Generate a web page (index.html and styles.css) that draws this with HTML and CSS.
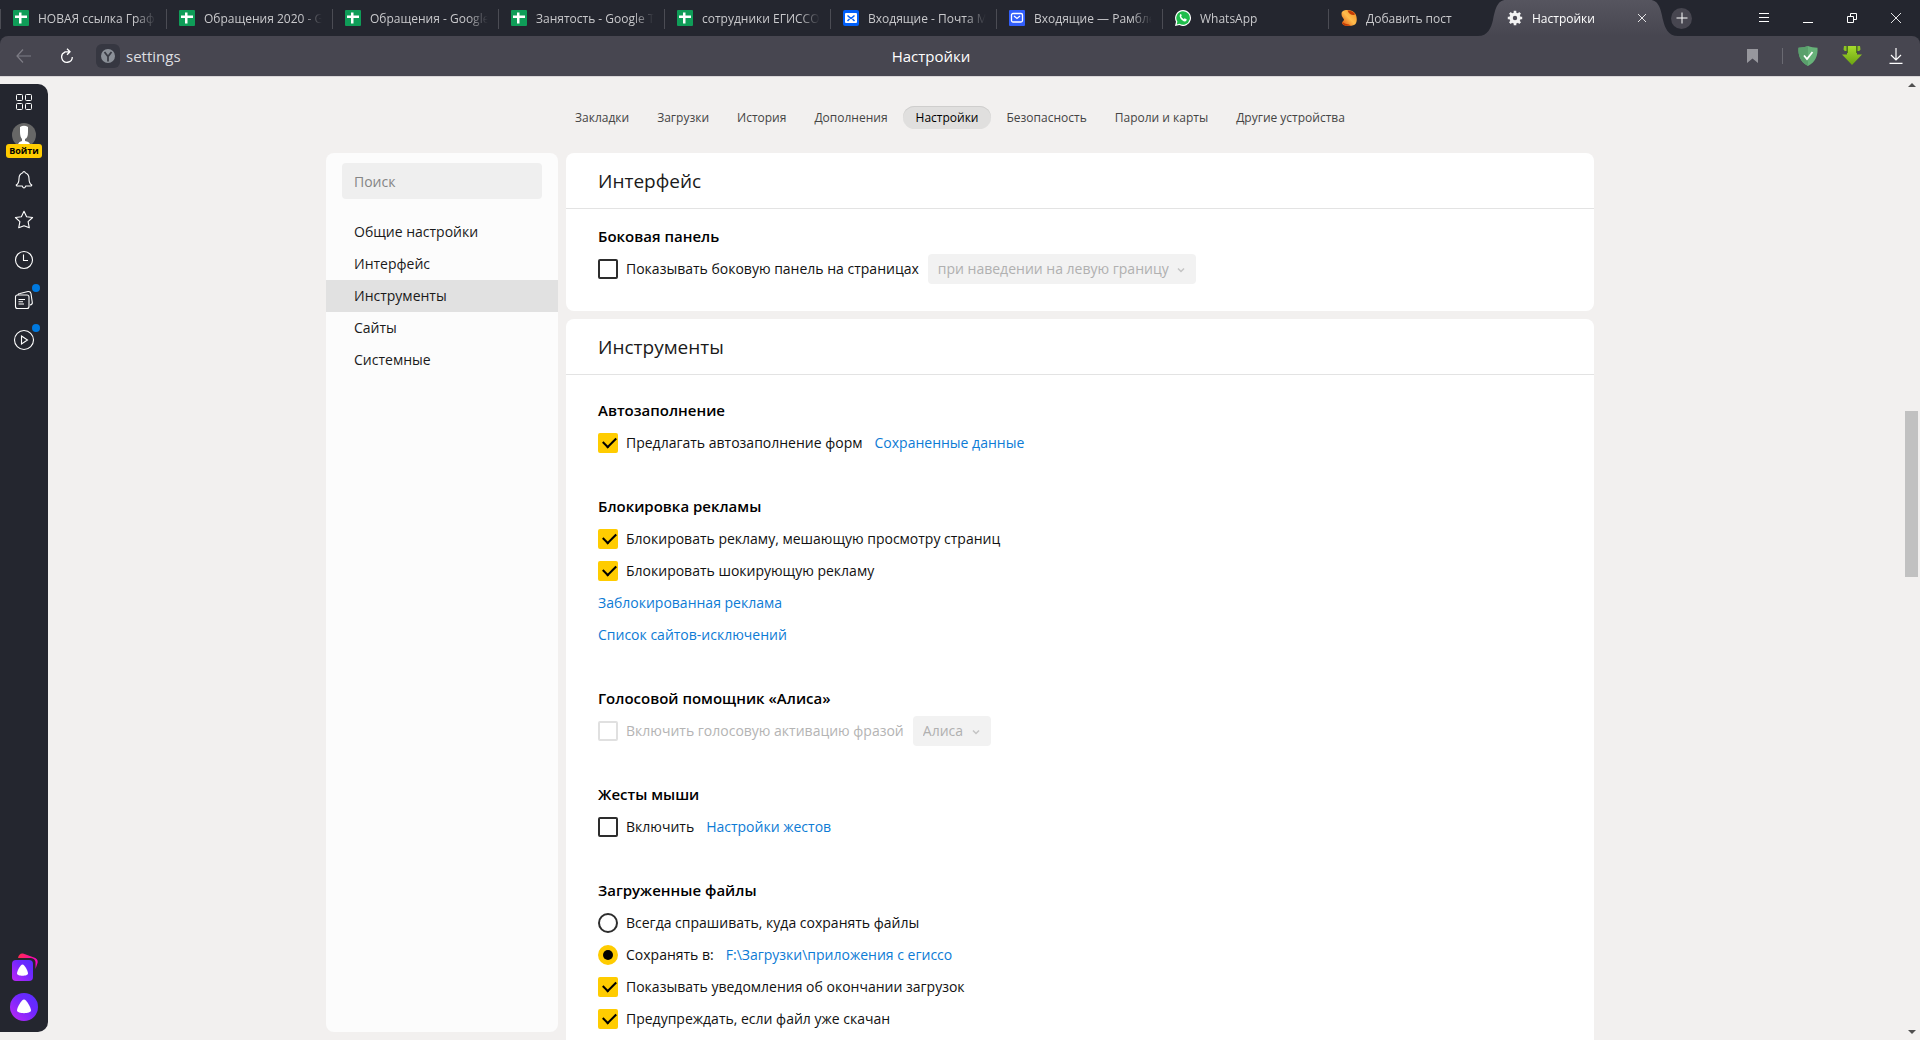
FILE: index.html
```html
<!DOCTYPE html>
<html lang="ru">
<head>
<meta charset="utf-8">
<meta name="viewport" content="width=device-width, initial-scale=1">
<title>Настройки</title>
<link rel="stylesheet" href="styles.css">
</head>
<body>
<svg class="defs" aria-hidden="true">
  <defs>
    <linearGradient id="tab-fill" x1="0" y1="0" x2="0" y2="1"><stop offset="0" stop-color="#56555f"/><stop offset="1" stop-color="#474650"/></linearGradient>
    <linearGradient id="alice" x1="0" y1="1" x2="1" y2="0"><stop offset="0" stop-color="#c127f5"/><stop offset=".6" stop-color="#6f27ff"/><stop offset="1" stop-color="#5330ff"/></linearGradient>
    <linearGradient id="pink" x1="0" y1="0" x2="1" y2="0"><stop offset="0" stop-color="#ff2a4d"/><stop offset="1" stop-color="#f800c8"/></linearGradient>
    <linearGradient id="lime" x1="0" y1="0" x2="0" y2="1"><stop offset="0" stop-color="#a6dc2c"/><stop offset="1" stop-color="#6ba312"/></linearGradient>
    <linearGradient id="nut" x1="1" y1="0" x2="0" y2="1"><stop offset="0" stop-color="#f08a20"/><stop offset=".5" stop-color="#ffbd4d"/><stop offset="1" stop-color="#e0500a"/></linearGradient>
    <symbol id="sheet" viewBox="0 0 16 16"><rect width="16" height="16" rx="1" fill="#0f9d58"/><path d="M6 2.500h2.500v11H6zM2 5.500h12v2.500H2z" fill="#fff"/></symbol>
  </defs>
</svg>

<header class="tabstrip">
  <div class="tabs" role="tablist">
    <button class="tab" role="tab"><svg class="favicon"><use href="#sheet"/></svg><span class="tab-title">НОВАЯ ссылка График</span></button>
    <button class="tab" role="tab"><svg class="favicon"><use href="#sheet"/></svg><span class="tab-title">Обращения 2020 - Google</span></button>
    <button class="tab" role="tab"><svg class="favicon"><use href="#sheet"/></svg><span class="tab-title">Обращения - Google Таблицы</span></button>
    <button class="tab" role="tab"><svg class="favicon"><use href="#sheet"/></svg><span class="tab-title">Занятость - Google Таблицы</span></button>
    <button class="tab" role="tab"><svg class="favicon"><use href="#sheet"/></svg><span class="tab-title">сотрудники ЕГИССО</span></button>
    <button class="tab" role="tab"><svg class="favicon" viewBox="0 0 16 16"><rect width="16" height="16" rx="2" fill="#005ff9"/><rect x="2" y="3" width="12" height="10" rx="1" fill="#fff"/><path d="M4.500 5.500 8 8.500l3.500-3M4.500 11l2-2M11.500 11l-2-2" fill="none" stroke="#005ff9" stroke-width="1.500"/></svg><span class="tab-title">Входящие - Почта Mail.ru</span></button>
    <button class="tab" role="tab"><svg class="favicon" viewBox="0 0 16 16"><rect width="16" height="16" rx="1" fill="#315efb"/><rect x="2.500" y="3.500" width="11" height="8.500" rx="1.500" fill="none" stroke="#fff" stroke-width="1.300"/><path d="M5 6l3 2.500L11 6" fill="none" stroke="#fff" stroke-width="1.300"/></svg><span class="tab-title">Входящие — Рамблер/почта</span></button>
    <button class="tab" role="tab"><svg class="favicon" viewBox="0 0 16 16"><path d="M8 0a8 8 0 1 1-3.700 15.100L0 16l1-4.200A8 8 0 0 1 8 0z" fill="#fff"/><path d="M8 1.200A6.800 6.800 0 1 1 4.500 13.800L1.700 14.400l.7-2.700A6.800 6.800 0 0 1 8 1.200z" fill="#1fbd4b"/><path d="M5.300 4.200c.6-.4 1 0 1.300 1 .2.600 0 .8-.5 1.400.6 1.200 1.400 2 2.700 2.600.8-.9.900-1 1.300-.8l1.500.8c.4.300-.2 2.200-1.900 2.200C7.200 11.200 3.200 6.500 5.300 4.200z" fill="#fff"/></svg><span class="tab-title">WhatsApp</span></button>
    <button class="tab" role="tab"><svg class="favicon" viewBox="0 0 16 16"><path d="M.5 4C.5 1 3 0 6 0c4 0 7 1.500 8.500 4 1.500 3 2 8-.5 10.500C12 16 9 16 7 16c-4 0-6-1.500-6-3 0-1.500 2-2 2-3.500C2.500 8 .5 7 .5 4z" fill="url(#nut)"/><path d="M6.500.500c3-.3 6 1 7.500 3.500C13.500 6 8 5 6.500.500zM1.500 12c2 2.500 6 1.500 8.500 3.500-4 1-9 0-8.500-3.500z" fill="#c43c05"/></svg><span class="tab-title">Добавить пост</span></button>
    <div class="tab-active" role="tab" aria-selected="true">
      <svg class="tab-shape" viewBox="0 0 200 36" preserveAspectRatio="none" aria-hidden="true"><path d="M0 36C10 36 13 28 15 20 17 10 19 0 28 0H172c9 0 11 10 13 20 2 8 5 16 15 16z" fill="url(#tab-fill)"/></svg>
      <svg class="favicon" viewBox="0 0 16 16"><circle cx="8" cy="8" r="3.900" fill="none" stroke="#f2f2f2" stroke-width="3.400"/><path d="M8 .8v3M8 12.200v3M.8 8h3M12.200 8h3M2.900 2.900l2.200 2.200M10.900 10.900l2.200 2.200M2.900 13.100l2.200-2.200M10.900 5.100l2.200-2.200" stroke="#f2f2f2" stroke-width="2.600"/></svg>
      <span class="tab-title">Настройки</span>
      <button class="tab-close" aria-label="Закрыть вкладку"><svg width="8" height="8" viewBox="0 0 8 8"><path d="M0 0l8 8M8 0L0 8" stroke="#e4e4e6"/></svg></button>
    </div>
  </div>
  <button class="new-tab" aria-label="Новая вкладка"><svg width="12" height="12" viewBox="0 0 12 12"><path d="M6 .5v11M.5 6h11" stroke="#fff"/></svg></button>
  <div class="window-buttons">
    <button aria-label="Меню"><svg width="12" height="12" viewBox="0 0 12 12"><path d="M1 1.500h10M1 5.500h10M1 9.500h10" stroke="#fff"/></svg></button>
    <button aria-label="Свернуть"><svg width="12" height="12" viewBox="0 0 12 12"><path d="M1 10.500h10" stroke="#fff"/></svg></button>
    <button aria-label="Восстановить"><svg width="12" height="12" viewBox="0 0 12 12"><path d="M4.500 4V1.500h6v6H8M1.500 4.500h6v6h-6z" fill="none" stroke="#fff"/></svg></button>
    <button aria-label="Закрыть"><svg width="12" height="12" viewBox="0 0 12 12"><path d="M1 1l10 10M11 1L1 11" stroke="#e4e4e6"/></svg></button>
  </div>
</header>

<div class="toolbar">
  <button class="back" aria-label="Назад"><svg width="16" height="14" viewBox="0 0 16 14"><path d="M7 .5L1 7l6 6.500M1 7h14" fill="none" stroke="#7d7c85" stroke-width="1.200"/></svg></button>
  <button class="reload" aria-label="Обновить"><svg width="14" height="16" viewBox="0 0 14 16"><path d="M5 4.100A5.300 5.300 0 1 0 12.300 9M4.500 3.800H9.500M7 .8l3 3-3 3" fill="none" stroke="#fff" stroke-width="1.300"/></svg></button>
  <button class="site" aria-label="О сайте"><svg width="14" height="14" viewBox="0 0 14 14"><circle cx="7" cy="7" r="7" fill="#8b9098"/><path d="M3.500 3L7 7.500 10.500 3M7 7v5.500" fill="none" stroke="#3a3c45" stroke-width="1.800"/></svg></button>
  <span class="address">settings</span>
  <span class="page-title">Настройки</span>
  <div class="extensions">
    <button aria-label="В закладки"><svg width="11" height="14" viewBox="0 0 11 14"><path d="M0 0h11v14L5.500 9.500 0 14z" fill="#97979d"/></svg></button>
    <span class="divider"></span>
    <button aria-label="Защита"><svg width="20" height="20" viewBox="0 0 20 20"><path d="M10 0c3 1 6 1.600 9.500 1.800C20 9 18 16 10 20 2 16 0 9 .5 1.800 4 1.600 7 1 10 0z" fill="#67b279"/><path d="M10 0v20C2 16 0 9 .5 1.800 4 1.600 7 1 10 0z" fill="#5aa06c"/><path d="M6 9.500l3 3.500 5.500-7" fill="none" stroke="#fff" stroke-width="1.800"/></svg></button>
    <button aria-label="Скачать видео"><svg width="20" height="20" viewBox="0 0 20 20"><path d="M2 0h2.500v5H2.800L1.500 3.500zM18 0h-2.500v5h1.700l1.300-1.500z" fill="#8cc522"/><path d="M5 0h10v8.500h5L10 19 0 8.500h5z" fill="url(#lime)"/><path d="M5.500 0v7M14.500 0v7" stroke="#4d7a12"/></svg></button>
    <button aria-label="Загрузки"><svg width="14" height="16" viewBox="0 0 14 16"><path d="M7 0v12M2 7l5 5 5-5M.5 15.300h13" fill="none" stroke="#fff" stroke-width="1.200"/></svg></button>
  </div>
</div>

<div class="viewport">
  <aside class="sidebar">
    <button aria-label="Табло"><svg width="18" height="18" viewBox="0 0 18 18"><g fill="none" stroke="#fff"><rect x="1.500" y="1.500" width="6" height="6" rx="1"/><rect x="10.500" y="1.500" width="6" height="6" rx="1"/><rect x="1.500" y="10.500" width="6" height="6" rx="1"/><rect x="10.500" y="10.500" width="6" height="6" rx="1"/></g></svg></button>
    <button class="login"><svg width="24" height="24" viewBox="0 0 24 24"><circle cx="12" cy="12" r="12" fill="#676767"/><path d="M8 4q4-2.500 8 0v5q0 6-3 7v2q4 .5 5 3-6 4-12 0 1-2.500 4-3v-2Q8 14 8 9z" fill="#fff"/></svg><span class="login-label">Войти</span></button>
    <button aria-label="Уведомления"><svg width="18" height="20" viewBox="0 0 18 20"><path d="M9 1.500q1 0 1.200 1.200Q14 4 14 8.500q0 5 2.800 6.500 0 1-1 1h-5Q9 20 7.200 16h-5q-1 0-1-1Q4 13.500 4 8.500 4 4 7.800 2.700 8 1.500 9 1.500z" fill="none" stroke="#fff" stroke-width="1.100"/></svg></button>
    <button aria-label="Закладки"><svg width="20" height="20" viewBox="0 0 20 20"><path d="M10 1.200l2.600 5.600 6 .7-4.500 4.100 1.200 6.200-5.300-2.100-5.300 2.100 1.200-6.200L1.400 7.500l6-.7z" fill="none" stroke="#fff" stroke-width="1.100" stroke-linejoin="round"/></svg></button>
    <button aria-label="История"><svg width="20" height="20" viewBox="0 0 20 20"><circle cx="10" cy="10" r="8.500" fill="none" stroke="#fff" stroke-width="1.100"/><path d="M9.500 4.500v6H14" fill="none" stroke="#fff" stroke-width="1.100"/></svg></button>
    <button class="has-dot" aria-label="Коллекции"><svg width="20" height="20" viewBox="0 0 20 20"><g fill="none" stroke="#fff" stroke-width="1.100"><rect x="1.500" y="5" width="13.500" height="13.500" rx="2"/><path d="M4 5q0-1.500 2-1.500l8-2q2.500-.3 3 2l1.300 9q.2 2-2.300 2.500M4.500 9.500H11M4.500 11.700H9M4.500 14H10"/></g></svg></button>
    <button class="has-dot" aria-label="Видео"><svg width="22" height="22" viewBox="0 0 22 22"><circle cx="11" cy="11" r="9.500" fill="none" stroke="#fff" stroke-width="1.100"/><path d="M8.500 7l6 4-6 4z" fill="none" stroke="#fff" stroke-width="1.100"/></svg></button>
    <button class="alice-cards" aria-label="Навыки Алисы"><svg width="28" height="28" viewBox="0 0 28 28"><path d="M8 5Q9 0 13 .5l11 4Q28.500 6 27.500 10l-2 6V9Q25 5.500 21 5z" fill="url(#pink)"/><rect x="2" y="7" width="21" height="21" rx="4" fill="url(#alice)"/><path d="M12.500 11.500c2 0 5.500 6.500 5.500 9 0 3-11 3-11 0 0-2.500 3.500-9 5.500-9z" fill="#fff"/></svg></button>
    <button aria-label="Алиса"><svg width="28" height="28" viewBox="0 0 28 28"><circle cx="14" cy="14" r="14" fill="url(#alice)"/><path d="M14 6.500c2.500 0 7 8 7 11 0 3.500-14 3.500-14 0 0-3 4.500-11 7-11z" fill="#fff"/></svg></button>
  </aside>

  <main class="page">
    <nav class="sections">
      <a href="#bookmarks">Закладки</a>
      <a href="#downloads">Загрузки</a>
      <a href="#history">История</a>
      <a href="#addons">Дополнения</a>
      <a href="#settings" class="current">Настройки</a>
      <a href="#security">Безопасность</a>
      <a href="#passwords">Пароли и карты</a>
      <a href="#devices">Другие устройства</a>
    </nav>
    <div class="columns">
      <div class="menu">
        <input class="search" type="search" placeholder="Поиск" aria-label="Поиск">
        <nav class="menu-list">
          <a href="#general">Общие настройки</a>
          <a href="#interface">Интерфейс</a>
          <a href="#tools" class="current">Инструменты</a>
          <a href="#sites">Сайты</a>
          <a href="#system">Системные</a>
        </nav>
      </div>
      <div class="cards">
        <section class="card">
          <h2>Интерфейс</h2>
          <div class="card-body">
            <div class="group">
              <h3>Боковая панель</h3>
              <div class="row">
                <label><input type="checkbox">Показывать боковую панель на страницах</label>
                <span class="select"><select disabled aria-label="Когда показывать панель"><option>при наведении на левую границу</option></select><svg width="8" height="6" viewBox="0 0 8 6"><path d="M1 1.500l3 3 3-3" fill="none" stroke="#c4c4c4" stroke-width="1.500"/></svg></span>
              </div>
            </div>
          </div>
        </section>
        <section class="card">
          <h2>Инструменты</h2>
          <div class="card-body roomy">
            <div class="group">
              <h3>Автозаполнение</h3>
              <div class="row"><label><input type="checkbox" checked>Предлагать автозаполнение форм</label><a class="after" href="#saved">Сохраненные данные</a></div>
            </div>
            <div class="group">
              <h3>Блокировка рекламы</h3>
              <div class="row"><label><input type="checkbox" checked>Блокировать рекламу, мешающую просмотру страниц</label></div>
              <div class="row"><label><input type="checkbox" checked>Блокировать шокирующую рекламу</label></div>
              <div class="row"><a href="#blocked">Заблокированная реклама</a></div>
              <div class="row"><a href="#exceptions">Список сайтов-исключений</a></div>
            </div>
            <div class="group">
              <h3>Голосовой помощник «Алиса»</h3>
              <div class="row">
                <label class="disabled"><input type="checkbox" disabled>Включить голосовую активацию фразой</label>
                <span class="select"><select disabled aria-label="Фраза активации"><option>Алиса</option></select><svg width="8" height="6" viewBox="0 0 8 6"><path d="M1 1.500l3 3 3-3" fill="none" stroke="#c4c4c4" stroke-width="1.500"/></svg></span>
              </div>
            </div>
            <div class="group">
              <h3>Жесты мыши</h3>
              <div class="row"><label><input type="checkbox">Включить</label><a class="after" href="#gestures">Настройки жестов</a></div>
            </div>
            <div class="group">
              <h3>Загруженные файлы</h3>
              <div class="row"><label><input type="radio" name="save">Всегда спрашивать, куда сохранять файлы</label></div>
              <div class="row"><label><input type="radio" name="save" checked>Сохранять в:</label><a class="after" href="#folder">F:\Загрузки\приложения с егиссо</a></div>
              <div class="row"><label><input type="checkbox" checked>Показывать уведомления об окончании загрузок</label></div>
              <div class="row"><label><input type="checkbox" checked>Предупреждать, если файл уже скачан</label></div>
            </div>
          </div>
        </section>
      </div>
    </div>
  </main>

  <div class="scrollbar" aria-hidden="true">
    <svg width="8" height="4" viewBox="0 0 8 4"><path d="M0 4l4-4 4 4z" fill="#505050"/></svg>
    <div class="track"><div class="thumb"></div></div>
    <svg width="8" height="4" viewBox="0 0 8 4"><path d="M0 0l4 4 4-4z" fill="#505050"/></svg>
  </div>
</div>
</body>
</html>
```
FILE: styles.css
```css
* { box-sizing: border-box; }

body {
  display: flex;
  flex-direction: column;
  height: 100vh;
  margin: 0;
  overflow: hidden;
  background: #24262f;
  color: #000;
  font: 14px/20px "Open Sans", "Noto Sans", sans-serif;
}

button {
  display: flex;
  align-items: center;
  justify-content: center;
  margin: 0;
  padding: 0;
  border: 0;
  background: none;
  color: inherit;
  font: inherit;
}

a { color: #0d7bd5; text-decoration: none; }
svg { display: block; flex: none; }
.defs { position: absolute; width: 0; height: 0; }

/* Tab strip */
.tabstrip { display: flex; align-items: center; height: 36px; flex: none; }
.tabs { display: flex; min-width: 0; }

.tab {
  flex: 0 1 166px;
  width: 166px;
  min-width: 40px;
  height: 36px;
  padding: 0 9px 0 13px;
  gap: 9px;
  justify-content: flex-start;
  background: linear-gradient(#4b4c54, #4b4c54) 0 9px / 1px 20px no-repeat;
  color: #c9c9cc;
}

.favicon { width: 16px; height: 16px; }

.tab-title {
  flex: 1;
  min-width: 0;
  padding-top: 1px;
  overflow: hidden;
  white-space: nowrap;
  text-align: left;
  font-size: 12px;
  line-height: 20px;
  -webkit-mask-image: linear-gradient(90deg, #000 82%, transparent 99%);
  mask-image: linear-gradient(90deg, #000 82%, transparent 99%);
}

.tab-active {
  position: relative;
  display: flex;
  align-items: center;
  flex: none;
  width: 200px;
  height: 36px;
  margin-left: -16px;
  padding: 0 28px 0 29px;
  gap: 9px;
  color: #fff;
}
.tab-active > * { position: relative; }
.tab-active > .tab-shape { position: absolute; inset: 0; width: 100%; height: 100%; }
.tab-close { width: 16px; height: 16px; }

.new-tab { flex: none; width: 21px; height: 21px; margin-left: -7px; border-radius: 50%; background: #474650; }
.window-buttons { display: flex; margin-left: auto; padding-right: 2px; }
.window-buttons button { width: 44px; height: 36px; }

/* Address bar */
.toolbar {
  display: flex;
  align-items: center;
  flex: none;
  height: 40px;
  padding: 0 2px 0 16px;
  border-radius: 8px 8px 0 0;
  background: #474650;
}
.back { width: 16px; height: 24px; }
.reload { width: 24px; height: 24px; margin: 0 17px 0 23px; }
.site { width: 24px; height: 24px; border-radius: 6px; background: #363741; }
.address { flex: 1; padding-left: 6px; color: #dedee0; font-size: 15px; }
.page-title { margin-right: 182px; color: #fff; font-size: 15px; }
.extensions { display: flex; flex: 1; align-items: center; justify-content: flex-end; }
.extensions button { width: 44px; height: 40px; }
.divider { width: 1px; height: 16px; margin: 0 3px 0 8px; background: #6a6a72; }

/* Page area */
.viewport {
  display: grid;
  grid-template-columns: 48px minmax(0, 1fr) 48px;
  flex: 1;
  min-height: 0;
  border-top: 1px solid #d9d6d8;
  background: #f2f0ef;
}

.sidebar {
  display: flex;
  flex-direction: column;
  align-items: center;
  margin: 7px 0 8px;
  padding: 9px 0 5px;
  border-radius: 0 10px 10px 0;
  background: #24262f;
}
.sidebar button { position: relative; width: 40px; height: 40px; flex: none; }
.sidebar button:first-child { height: 18px; }
.sidebar .login { flex-direction: column; height: 48px; margin-bottom: 1px; padding-top: 10px; }
.login-label {
  width: 36px;
  margin-top: -3px;
  border-radius: 3px;
  background: #fc0;
  color: #000;
  font-size: 9px;
  font-weight: 700;
  line-height: 14px;
}
.has-dot::after {
  content: "";
  position: absolute;
  top: 4px;
  right: 4px;
  width: 8px;
  height: 8px;
  border-radius: 50%;
  background: #0079df;
}
.sidebar .alice-cards { margin-top: auto; }

.page {
  display: flex;
  flex-direction: column;
  width: 100%;
  max-width: 1268px;
  min-height: 0;
  margin: 0 auto;
}

.sections { display: flex; justify-content: center; flex: none; gap: 2px; padding: 29px 0 24px; }
.sections a { padding: 1px 13px 0; border-radius: 12px; color: #444; font-size: 12px; line-height: 22px; }
.sections .current { background: #e0dfde; box-shadow: inset 0 1px #cfcecd; color: #000; }

.columns { display: flex; flex: 1; min-height: 0; gap: 8px; }

.menu {
  flex: none;
  width: 232px;
  margin-bottom: 8px;
  padding-top: 10px;
  border-radius: 8px;
  background: #fcfcfc;
}
.search {
  display: block;
  width: 200px;
  height: 36px;
  margin: 0 16px 17px;
  padding: 0 12px;
  border: 0;
  border-radius: 4px;
  background: #efefef;
  font: inherit;
}
.search::placeholder { color: #858585; }
.menu-list a { display: block; padding: 0 28px; color: #1a1a1a; line-height: 32px; }
.menu-list .current { background: #e1e1e1; }

.cards { display: flex; flex: 1; flex-direction: column; gap: 8px; min-width: 0; }
.card { flex: none; border-radius: 8px; background: #fff; }
.card h2 {
  margin: 0;
  padding: 2px 32px 0;
  border-bottom: 1px solid #e3e3e3;
  color: #1a1a1a;
  font-size: 19px;
  font-weight: 400;
  line-height: 53px;
}
.card-body { display: flex; flex-direction: column; gap: 32px; padding: 12px 32px 26px; }
.card-body.roomy { padding-top: 20px; }
.card h3 { margin: 0; padding-bottom: 2px; font-size: 15px; font-weight: 600; line-height: 30px; }

.row { display: flex; align-items: center; height: 32px; }
.row label { display: flex; align-items: center; gap: 8px; color: #111; }
.row .disabled { color: #b4b4b4; }
.row .after { margin-left: 12px; }

input[type="checkbox"],
input[type="radio"] {
  display: grid;
  place-items: center;
  width: 20px;
  height: 20px;
  margin: 0;
  border: 2px solid #2d2d2d;
  border-radius: 2px;
  background: #fff;
  appearance: none;
}
input[type="radio"] { border-radius: 50%; }
input:checked { border-color: #fc0; background: #fc0; }
input:disabled { border-color: #e0e0e0; }
input[type="checkbox"]:checked::before {
  content: "";
  width: 11px;
  height: 6px;
  margin: -4px 0 0 2px;
  border: solid #000;
  border-width: 0 0 2px 2px;
  transform: rotate(-45deg);
}
input[type="radio"]:checked::before {
  content: "";
  width: 10px;
  height: 10px;
  border-radius: 50%;
  background: #000;
}

.select { position: relative; display: block; margin-left: 9px; }
.select select {
  display: block;
  height: 30px;
  margin: 0;
  padding: 0 27px 0 10px;
  border: 0;
  border-radius: 4px;
  background: #f2f2f2;
  color: #b0b0b0;
  font: inherit;
  opacity: 1;
  appearance: none;
}
.select svg { position: absolute; top: 13px; right: 11px; }

/* Scrollbar */
.scrollbar {
  display: flex;
  flex-direction: column;
  align-items: center;
  justify-self: end;
  width: 17px;
  padding: 6px 0;
}
.track { display: grid; grid-template-rows: 323fr 166fr 452fr; flex: 1; width: 13px; }
.thumb { grid-row: 2; background: #c1c1c1; }
```
